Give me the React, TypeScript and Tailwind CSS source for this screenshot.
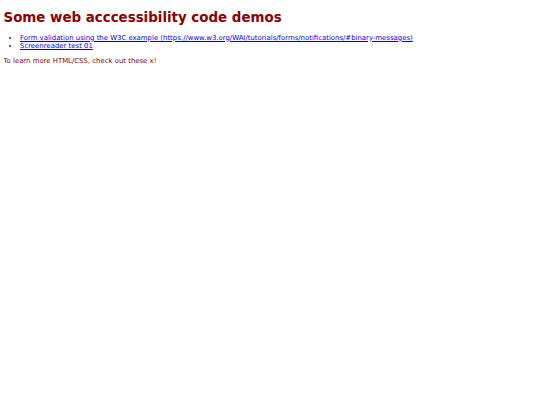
export default function App() {
  return (
    <div className="min-h-[405px] bg-white px-[3.5px] py-px text-[6.92px] text-[#8b0000]" style={{ fontFamily: '"DejaVu Sans", Verdana, sans-serif' }}>
      <h1 className="mt-[8.7px] mb-[9px] text-[13.4px] font-bold leading-[normal]">Some web acccessibility code demos</h1>
      <ul className="my-[7px] list-disc pl-[16.5px] leading-[normal]">
        <li>
          <a href="#" className="text-[#0000ee] underline">
            Form validation using the W3C example (https://www.w3.org/WAI/tutorials/forms/notifications/#binary-messages)
          </a>
        </li>
        <li>
          <a href="#" className="text-[#0000ee] underline">
            Screenreader test 01
          </a>
        </li>
      </ul>
      <p className="my-[7px] leading-[normal]">To learn more HTML/CSS, check out these x!</p>
    </div>
  );
}
